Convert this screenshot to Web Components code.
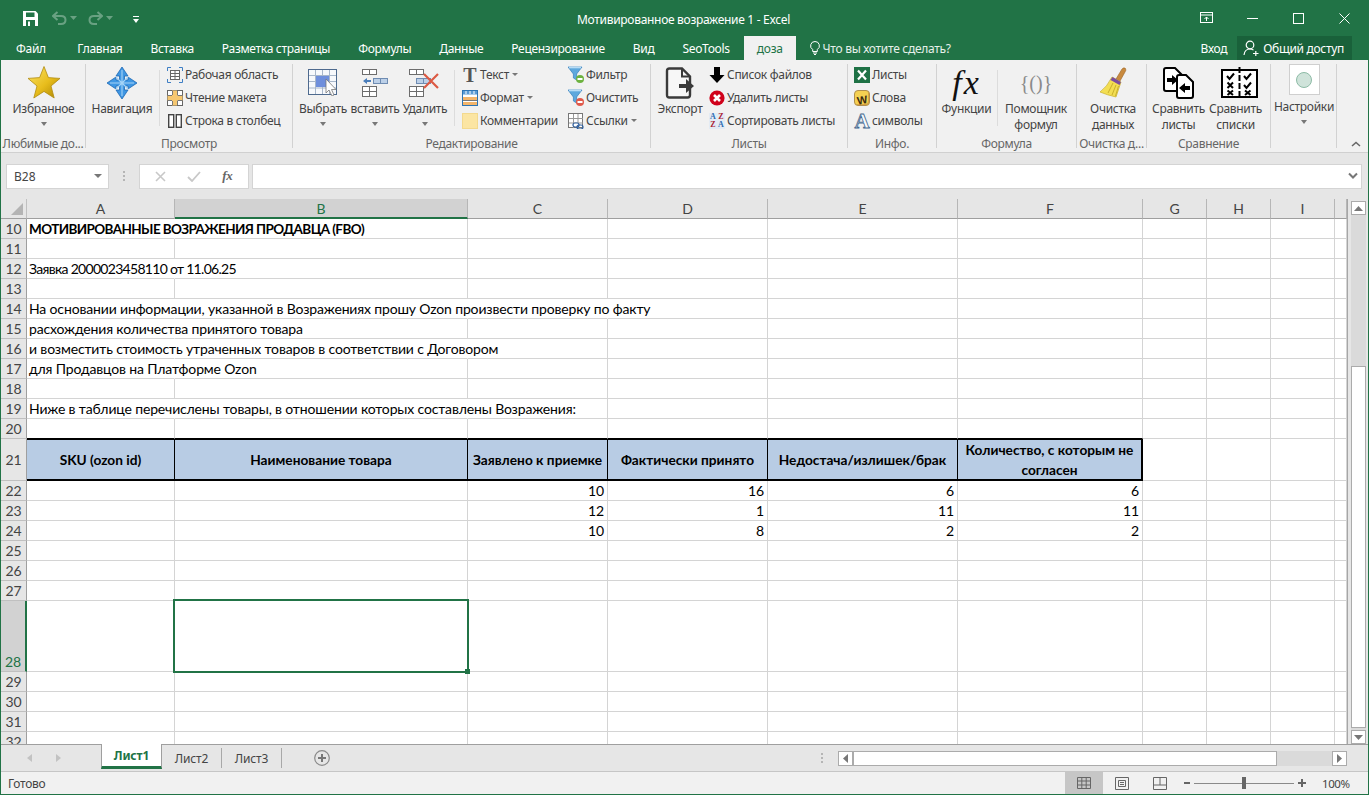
<!DOCTYPE html>
<html lang="ru">
<head>
<meta charset="UTF-8" />
<title>Excel</title>
<style>
  html, body { margin: 0; padding: 0; overflow: hidden; height: 100%; }
</style>
</head>
<body>
<xl-window>
  <xl-titlebar title="Мотивированное возражение 1 - Excel"></xl-titlebar>
  <xl-menu></xl-menu>
  <xl-ribbon>
    <xl-group w="85" label="Любимые до...">
      <xl-big icon="star" w="79" arrow>Избранное</xl-big>
    </xl-group>
    <xl-group w="207" label="Просмотр">
      <xl-big icon="nav" w="66">Навигация</xl-big>
      <xl-sep></xl-sep>
      <xl-col>
        <xl-small icon="workspace">Рабочая область</xl-small>
        <xl-small icon="reading">Чтение макета</xl-small>
        <xl-small icon="rowcol">Строка в столбец</xl-small>
      </xl-col>
    </xl-group>
    <xl-group w="358" label="Редактирование">
      <xl-big icon="select" w="54" arrow>Выбрать</xl-big>
      <xl-big icon="insert" w="50" arrow>вставить</xl-big>
      <xl-big icon="remove" w="50" arrow>Удалить</xl-big>
      <xl-sep></xl-sep>
      <xl-col style="width:106px;box-sizing:border-box">
        <xl-small icon="text" drop>Текст</xl-small>
        <xl-small icon="format" drop>Формат</xl-small>
        <xl-small icon="note">Комментарии</xl-small>
      </xl-col>
      <xl-col>
        <xl-small icon="filter">Фильтр</xl-small>
        <xl-small icon="clear">Очистить</xl-small>
        <xl-small icon="links" drop>Ссылки</xl-small>
      </xl-col>
    </xl-group>
    <xl-group w="197" label="Листы">
      <xl-big icon="export" w="52">Экспорт</xl-big>
      <xl-col>
        <xl-small icon="down">Список файлов</xl-small>
        <xl-small icon="delete">Удалить листы</xl-small>
        <xl-small icon="sort">Сортировать листы</xl-small>
      </xl-col>
    </xl-group>
    <xl-group w="89" label="Инфо.">
      <xl-col>
        <xl-small icon="sheets">Листы</xl-small>
        <xl-small icon="words">Слова</xl-small>
        <xl-small icon="symbols">символы</xl-small>
      </xl-col>
    </xl-group>
    <xl-group w="140" label="Формула">
      <xl-big icon="fx" w="53">Функции</xl-big>
      <xl-sep></xl-sep>
      <xl-big icon="braces" w="68">Помощник<br>формул</xl-big>
    </xl-group>
    <xl-group w="70" label="Очистка д...">
      <xl-big icon="broom" w="66">Очистка<br>данных</xl-big>
    </xl-group>
    <xl-group w="124" label="Сравнение">
      <xl-big icon="cmpsheets" w="57">Сравнить<br>листы</xl-big>
      <xl-big icon="cmplists" w="57" shift="4">Сравнить<br>списки</xl-big>
    </xl-group>
    <xl-group w="66" label="">
      <xl-big icon="settings" w="60" arrow raised>Настройки</xl-big>
    </xl-group>
  </xl-ribbon>
  <xl-formula cell="B28"></xl-formula>
  <xl-sheet></xl-sheet>
  <xl-sheettabs></xl-sheettabs>
  <xl-status></xl-status>
</xl-window>

<script>
const UI_FONT = '"Noto Sans", "Open Sans", sans-serif';
const CELL_FONT = 'Lato, "Noto Sans", sans-serif';

const ICONS = {
  star: [32, 33, `<defs><linearGradient id="g" x1="0" y1="0" x2="1" y2="1"><stop offset="0" stop-color="#fbe46a"/><stop offset=".55" stop-color="#e8bd1c"/><stop offset="1" stop-color="#a98300"/></linearGradient></defs>
    <path d="M16 0.5 L20.4 11.6 L32 12.4 L23 20 L26.2 32 L16 25.4 L5.8 32 L9 20 L0 12.4 L11.6 11.6 Z" fill="url(#g)" stroke="#b18c10" stroke-width=".8"/>`],
  nav: [30, 32, `<path d="M15 0 L21 9 L17.5 9 L17.5 13 L21 13 L21 10 L30 16 L21 22 L21 19 L17.5 19 L17.5 23 L21 23 L15 32 L9 23 L12.5 23 L12.5 19 L9 19 L9 22 L0 16 L9 10 L9 13 L12.5 13 L12.5 9 L9 9 Z" fill="#3f97e3" stroke="#1d68b4" stroke-width=".8"/>
    <path d="M15 3 V29 M3 16 H27 M9 10 L21 22 M21 10 L9 22" stroke="#a5d4f7" stroke-width="1.1" fill="none"/>`],
  select: [30, 27, `<rect x=".5" y=".5" width="28" height="25" fill="#f7f9fc" stroke="#4e6a8e"/>
    <path d="M7.5 1V25M14.5 1V25M21.5 1V25M1 6.5H28M1 12.5H28M1 19H28" stroke="#a8b7ca" fill="none"/>
    <rect x="8" y="7" width="13" height="11" fill="#6f8fdc"/>
    <path d="M18 10 V24 L21 21 L24 27 L26 26 L23.5 20.5 L28 20.5 Z" fill="#fff" stroke="#777" stroke-width=".8"/>`],
  insert: [28, 28, `<g fill="#fff" stroke="#6d6d6d"><rect x="1.5" y=".5" width="7" height="5"/><rect x="8.5" y=".5" width="7" height="5"/>
    <rect x="1.5" y="17.5" width="7" height="5"/><rect x="8.5" y="17.5" width="7" height="5"/><rect x="1.5" y="22.5" width="7" height="5"/><rect x="8.5" y="22.5" width="7" height="5"/></g>
    <g fill="#bcd0e8" stroke="#6f8cb2"><rect x="12.5" y="9.5" width="7" height="5"/><rect x="19.5" y="9.5" width="7" height="5"/></g>
    <path d="M2 12 L6 9 V11 H10 V13 H6 V15 Z" fill="#4a7ebb"/>`],
  remove: [32, 28, `<g fill="#fff" stroke="#6d6d6d"><rect x=".5" y=".5" width="7" height="5"/><rect x="7.5" y=".5" width="7" height="5"/>
    <rect x=".5" y="17.5" width="7" height="5"/><rect x="7.5" y="17.5" width="7" height="5"/><rect x=".5" y="22.5" width="7" height="5"/><rect x="7.5" y="22.5" width="7" height="5"/></g>
    <g fill="#bcd0e8" stroke="#6f8cb2"><rect x="7.5" y="9.5" width="7" height="5"/><rect x="14.5" y="9.5" width="7" height="5"/></g>
    <path d="M15 5 L29 19 M29 5 L15 19" stroke="#dc5a44" stroke-width="2.2"/>`],
  workspace: [16, 16, `<path d="M.5 4V.5H4M12 .5H15.5V4M15.5 12V15.5H12M4 15.5H.5V12" stroke="#3f7fc4" fill="none"/>
    <rect x="3.5" y="3.5" width="9" height="9" fill="#fff" stroke="#666"/><path d="M3.5 6.5H12.5M3.5 9.5H12.5M8 3.5V12.5" stroke="#666" fill="none"/>`],
  reading: [16, 16, `<rect x=".5" y=".5" width="15" height="15" fill="#fff" stroke="#666"/>
    <path d="M5.5 1V15M10.5 1V15M1 5.5H15M1 10.5H15" stroke="#888" fill="none"/><path d="M5 0.5H10V15.5H5ZM.5 5.5H15.5V10.5H.5Z" fill="#f6c770"/>
    <path d="M5.5 1V5M10.5 1V5M5.5 11V15M10.5 11V15M1 5.5H5M11 5.5H15M1 10.5H5M11 10.5H15" stroke="#777" fill="none"/>`],
  rowcol: [16, 16, `<g fill="#fff" stroke="#444" stroke-width="1.4"><rect x="1.7" y="1.7" width="5" height="12.6"/><rect x="9.3" y="1.7" width="5" height="12.6"/></g>`],
  format: [16, 16, `<rect x=".5" y=".5" width="15" height="15" fill="#fff" stroke="#2e75b5"/><rect x="1" y="1" width="14" height="3.5" fill="#5b9bd5"/><rect x="1" y="7" width="14" height="3.5" fill="#f4b56b"/><rect x="1" y="10.5" width="14" height="1.5" fill="#fff"/><rect x="1" y="12" width="14" height="3" fill="#f4b56b"/>
    <path d="M4 1V4M8 1V4M12 1V4" stroke="#fff"/><path d="M1 10.5H15" stroke="#777"/>`],
  note: [16, 16, `<rect x="0" y="0" width="16" height="16" fill="#fbe5a3"/><rect x=".5" y=".5" width="15" height="15" fill="none" stroke="#f3d98e"/>`],
  filter: [16, 18, `<path d="M0 1 H14 L8.6 8 V14 L5.4 12 V8 Z" fill="#5ea8dd" stroke="#3580bd" stroke-width=".7"/><path d="M1 1.5H13" stroke="#b8dcf5" stroke-width="1.6"/>
    <circle cx="12" cy="13" r="4" fill="#6db23f"/><rect x="9.5" y="12" width="5" height="2" fill="#fff"/>`],
  clear: [16, 18, `<path d="M0 1 H14 L8.6 8 V14 L5.4 12 V8 Z" fill="#5ea8dd" stroke="#3580bd" stroke-width=".7"/><path d="M1 1.5H13" stroke="#b8dcf5" stroke-width="1.6"/>
    <circle cx="12" cy="13" r="4" fill="#e05a4b"/><rect x="9.5" y="12" width="5" height="2" fill="#fff"/>`],
  links: [16, 16, `<rect x=".5" y=".5" width="14" height="14" fill="#fff" stroke="#777"/><path d="M5.5 1V15M10 1V15M1 5.5H15M1 10H15" stroke="#999"/>
    <rect x="5" y="10" width="6" height="4" rx="2" fill="#fff" stroke="#2e5f9e" stroke-width="1.2"/><rect x="9" y="12" width="6" height="4" rx="2" fill="none" stroke="#2e5f9e" stroke-width="1.2"/>`],
  export: [30, 32, `<path d="M2 4 Q2 1.5 4.5 1.5 H17 L25 9.5 V28 Q25 30.5 22.5 30.5 H4.5 Q2 30.5 2 28 Z" fill="#f7f7f7" stroke="#3a3a3a" stroke-width="2.4"/><path d="M17 2 V9.5 H25" fill="none" stroke="#3a3a3a" stroke-width="2"/>
    <path d="M14 17 H21 V12 L29 19 L21 26 V21 H14 Z" fill="#3a3a3a"/>`],
  down: [16, 16, `<path d="M5 0 H11 V8 H15.5 L8 16 L.5 8 H5 Z" fill="#000"/>`],
  delete: [16, 16, `<circle cx="8" cy="8" r="7.6" fill="#d0021b"/><path d="M5 5 L11 11 M11 5 L5 11" stroke="#fff" stroke-width="2.6"/>`],
  sheets: [16, 16, `<rect width="16" height="16" fill="#1e7145"/><path d="M4 3.5 L12 12.5 M12 3.5 L4 12.5" stroke="#fff" stroke-width="2.2"/>`],
  cmpsheets: [33, 32, `<g fill="#fff" stroke="#000" stroke-width="2"><path d="M2 3 Q2 1 4 1 H13 L20 8 V22 Q20 24 18 24 H4 Q2 24 2 22 Z"/><path d="M15 10 Q15 8 17 8 H24 L31 15 V29 Q31 31 29 31 H17 Q15 31 15 29 Z"/></g>
    <path d="M5 11 H10 V8 L16 13 L10 18 V15 H5 Z M28 19 H23 V16 L17 21 L23 26 V23 H28 Z" fill="#000"/>`],
  cmplists: [37, 32, `<rect x="1" y="3" width="35" height="27" fill="#fff" stroke="#000" stroke-width="2"/><path d="M18.5 0V32" stroke="#000" stroke-width="2" stroke-dasharray="6 2"/>
    <g fill="none" stroke="#000" stroke-width="2"><path d="M6 9 L8.5 12 L13 6.5M23 9 L25.5 12 L30 6.5M23 18 L25.5 21 L30 15.5"/><path d="M6.5 15.5 L12 21M12 15.5 L6.5 21M6.5 23.5 L12 28M12 23.5 L6.5 28M24 23.5 L29.5 28M29.5 23.5 L24 28"/></g>`],
  broom: [28, 32, `<path d="M17 12 L23 2 Q25 0 26.5 1.5 Q27.5 3 26 5 L21 14 Z" fill="#c98a3e" stroke="#9a6526" stroke-width=".6"/>
    <path d="M13 10 L22 15 L17 30 Q8 28 1 25 Q8 20 13 10 Z" fill="#f3de52" stroke="#c9b02c" stroke-width=".7"/><path d="M13.5 10 L22 15 L20.5 18 L11.5 13 Z" fill="#7b4ea0"/>
    <path d="M14 16 L9 26M17 18 L13 28M19.5 19 L16.5 29" stroke="#c9b02c" fill="none"/>`],
};

function icon(name) {
  const def = ICONS[name];
  if (!def) return '';
  return `<svg width="${def[0]}" height="${def[1]}" viewBox="0 0 ${def[0]} ${def[1]}" style="display:block">${def[2]}</svg>`;
}

// letters that are real text, not shapes
const TEXT_ICONS = {
  text: `<span style="font:bold 20px 'Liberation Serif',serif;color:#555;line-height:16px;letter-spacing:0">T</span>`,
  fx: `<span style="font:italic 34px 'Liberation Serif',serif;color:#111;line-height:32px;letter-spacing:2px">fx</span>`,
  braces: `<span style="font:20px 'Liberation Serif',serif;color:#8a8a8a;line-height:30px;letter-spacing:0">{()}</span>`,
  words: `<span style="display:block;width:16px;height:16px;background:#f5d152;border:1px solid #b08f4e;box-shadow:inset -1px -1px 0 #d9a441;box-sizing:border-box;border-radius:4px;text-align:center"><span style="display:inline-block;transform:rotate(-10deg);font:bold 11px/14px 'Liberation Sans',sans-serif;color:#3a2a10;letter-spacing:0">W</span></span>`,
  symbols: `<span style="font:bold 21px/16px 'Liberation Serif',serif;color:#f7f9fb;-webkit-text-stroke:.8px #44688f;letter-spacing:0">A</span>`,
  sort: `<span style="display:grid;grid-template-columns:8px 8px;width:16px;height:16px;background:#e3ebf4;font:bold 8px/8px 'Liberation Serif',serif;text-align:center;color:#2d6cb2;letter-spacing:0"><span>A</span><span style="color:#a23">Z</span><span style="color:#a23">Z</span><span>A</span></span>`,
};

function renderIcon(name) { return TEXT_ICONS[name] || icon(name); }

class XlWindow extends HTMLElement {
  constructor() {
    super();
    this.attachShadow({ mode: 'open' }).innerHTML = `<style>
      :host { display: flex; flex-direction: column; box-sizing: border-box; width: 1369px; height: 795px;
        border: 1px solid #217346; border-top: 0; background: #e6e6e6; font: 12px ${UI_FONT}; letter-spacing: -.3px; color: #444; overflow: hidden; }
    </style><slot></slot>`;
  }
}

class XlTitlebar extends HTMLElement {
  constructor() {
    super();
    this.attachShadow({ mode: 'open' }).innerHTML = `<style>
      :host { display: flex; align-items: center; height: 36px; background: #217346; color: #fff; flex: none; }
      .qa { width: 576px; display: flex; align-items: center; flex: none; padding-left: 22px; box-sizing: border-box; gap: 0; }
      .title { flex: 1; font-size: 12px; white-space: nowrap; margin-top: 2px; }
      .ctl { display: flex; align-items: center; margin-right: 1px; }
      .ctl div { width: 46px; display: flex; justify-content: center; }
      svg { display: block; }
    </style>
    <div class="qa">
      <svg width="15" height="15" viewBox="0 0 15 15" style="margin-right:14px"><path d="M0 0H12.5L15 2.5V15H0Z" fill="#fff"/><rect x="3" y="1.5" width="8.5" height="4.5" fill="#217346"/><rect x="3" y="9" width="9" height="6" fill="#217346"/><rect x="5" y="10.5" width="2" height="4.5" fill="#fff"/></svg>
      <svg width="15" height="14" viewBox="0 0 15 14" opacity=".4" style="margin-right:3px"><path d="M5.5 1 L1 5 L5.5 9 M1.5 5 H9 Q13.5 5 13.5 9 Q13.5 13 9 13 H6" fill="none" stroke="#d6e7dd" stroke-width="2"/></svg>
      <svg width="7" height="4" viewBox="0 0 7 4" opacity=".4" style="margin-right:11px"><path d="M0 0H7L3.5 4Z" fill="#d6e7dd"/></svg>
      <svg width="15" height="14" viewBox="0 0 15 14" opacity=".4" style="margin-right:3px"><path d="M9.5 1 L14 5 L9.5 9 M13.5 5 H6 Q1.5 5 1.5 9 Q1.5 13 6 13 H9" fill="none" stroke="#d6e7dd" stroke-width="2"/></svg>
      <svg width="7" height="4" viewBox="0 0 7 4" opacity=".4" style="margin-right:20px"><path d="M0 0H7L3.5 4Z" fill="#d6e7dd"/></svg>
      <svg width="6" height="7" viewBox="0 0 6 7" style="margin-top:3px"><path d="M0 0H6V1H0ZM0 3H6L3 7Z" fill="#fff"/></svg>
    </div>
    <div class="title">${this.getAttribute('title')}</div>
    <div class="ctl">
      <div><svg width="13" height="12" viewBox="0 0 13 12"><rect x=".5" y=".5" width="12" height="10" fill="none" stroke="#fff"/><path d="M1 3H12M6.5 9V5M4.5 7L6.5 5L8.5 7" fill="none" stroke="#fff"/></svg></div>
      <div><svg width="11" height="1" viewBox="0 0 11 1"><rect width="11" height="1" fill="#fff"/></svg></div>
      <div><svg width="11" height="11" viewBox="0 0 11 11"><rect x=".5" y=".5" width="10" height="10" fill="none" stroke="#fff"/></svg></div>
      <div><svg width="11" height="11" viewBox="0 0 11 11"><path d="M.5 .5L10.5 10.5M10.5 .5L.5 10.5" stroke="#fff"/></svg></div>
    </div>`;
  }
}

class XlMenu extends HTMLElement {
  constructor() {
    super();
    const items = ['Главная', 'Вставка', 'Разметка страницы', 'Формулы', 'Данные', 'Рецензирование', 'Вид', 'SeoTools'];
    this.attachShadow({ mode: 'open' }).innerHTML = `<style>
      :host { display: flex; height: 24px; align-items: stretch; background: #217346; color: #fff; flex: none; font-size: 12px; }
      .tab { display: flex; align-items: center; padding: 0 14px; white-space: nowrap; }
      .file { padding: 0 15px; font-size: 12px; margin-right: 2.5px; }
      .active { background: #f1f1f1; color: #217346; padding: 0 13px; }
      .tell { display: flex; align-items: center; padding-left: 14px; gap: 3px; color: #e6f0ea; flex: 1; }
      .right { display: flex; align-items: stretch; margin-right: 16px; }
      .login { display: flex; align-items: center; padding: 0 10px; }
      .share { display: flex; align-items: center; gap: 4px; background: #19613a; padding: 0 8px 0 6px; }
    </style>
    <div class="tab file">Файл</div>
    ${items.map(t => `<div class="tab">${t}</div>`).join('')}
    <div class="tab active">доза</div>
    <div class="tell">
      <svg width="10" height="14" viewBox="0 0 10 14"><path d="M5 .5a4.3 4.3 0 0 0-2.3 8V10.5h4.6V8.5A4.3 4.3 0 0 0 5 .5ZM3 12H7M4 13.5H6" fill="none" stroke="#fff"/></svg>
      <span>Что вы хотите сделать?</span>
    </div>
    <div class="right">
      <div class="login">Вход</div>
      <div class="share">
        <svg width="16" height="16" viewBox="0 0 16 16"><circle cx="7" cy="5" r="3.8" fill="none" stroke="#fff" stroke-width="1.2"/><path d="M1 15C1.5 10.5 4 9 7 9C8.5 9 9.5 9.5 10.5 10M10 13.5H15.5M12.8 11V16" fill="none" stroke="#fff" stroke-width="1.2"/></svg>
        <span>Общий доступ</span>
      </div>
    </div>`;
  }
}

class XlRibbon extends HTMLElement {
  constructor() {
    super();
    this.attachShadow({ mode: 'open' }).innerHTML = `<style>
      :host { display: flex; position: relative; flex: none; height: 93px; box-sizing: border-box; padding: 4px 0 5px; background: #f1f1f1;
        border-bottom: 1px solid #d0d0d0; color: #444; }
      .chev { position: absolute; right: 7px; bottom: 5px; }
    </style><slot></slot>
    <svg class="chev" width="10" height="6" viewBox="0 0 10 6"><path d="M1 5L5 1.5L9 5" fill="none" stroke="#666" stroke-width="1.5"/></svg>`;
  }
}

class XlGroup extends HTMLElement {
  constructor() {
    super();
    const w = this.getAttribute('w');
    this.attachShadow({ mode: 'open' }).innerHTML = `<style>
      :host { display: flex; flex-direction: column; flex: none; box-sizing: border-box; width: ${w}px; height: 84px; border-right: 1px solid #d2d2d2; }
      .body { flex: 1; display: flex; justify-content: flex-start; min-height: 0; padding: 0 3px; }
      .label { height: 14px; line-height: 14px; margin-bottom: -3px; text-align: center; white-space: nowrap; color: #666; }
    </style><div class="body"><slot></slot></div><div class="label">${this.getAttribute('label')}</div>`;
  }
}

class XlBig extends HTMLElement {
  constructor() {
    super();
    const name = this.getAttribute('icon');
    const w = this.getAttribute('w');
    const raised = this.hasAttribute('raised');
    const shift = this.getAttribute('shift') || 0;
    const art = name === 'settings'
      ? `<span class="box"><span class="dot"></span></span>`
      : renderIcon(name);
    this.attachShadow({ mode: 'open' }).innerHTML = `<style>
      :host { display: flex; flex-direction: column; align-items: center; flex: none; width: ${w}px; text-align: center; line-height: 16px; }
      .art { height: ${raised ? 35 : 37}px; display: flex; align-items: ${raised ? 'flex-start' : 'center'}; justify-content: center; flex: none; transform: translateX(${shift}px); }
      .box { display: flex; align-items: center; justify-content: center; box-sizing: border-box; width: 31px; height: 31px; background: #fff; border: 1px solid #cfcfcf; }
      .dot { width: 14px; height: 14px; border-radius: 50%; background: #cfe3da; border: 1px solid #8dbba6; }
      .arrow { margin-top: 5px; width: 0; height: 0; border: 3.5px solid transparent; border-top: 4px solid #777; border-bottom: 0; }
    </style><div class="art">${art}</div><div><slot></slot></div>${this.hasAttribute('arrow') ? '<div class="arrow"></div>' : ''}`;
  }
}

class XlCol extends HTMLElement {
  constructor() {
    super();
    this.attachShadow({ mode: 'open' }).innerHTML = `<style>
      :host { display: flex; flex-direction: column; flex: none; padding: 0 3px; margin-top: -1px; }
    </style><slot></slot>`;
  }
}

class XlSmall extends HTMLElement {
  constructor() {
    super();
    this.attachShadow({ mode: 'open' }).innerHTML = `<style>
      :host { display: flex; align-items: center; gap: 2px; height: 23px; white-space: nowrap; }
      .i { width: 16px; height: 16px; display: flex; align-items: center; justify-content: center; flex: none; }
      .d { margin-left: 1px; width: 0; height: 0; border: 3px solid transparent; border-top: 3.5px solid #777; border-bottom: 0; }
    </style><span class="i">${renderIcon(this.getAttribute('icon'))}</span><span><slot></slot></span>${this.hasAttribute('drop') ? '<span class="d"></span>' : ''}`;
  }
}

class XlSep extends HTMLElement {
  constructor() {
    super();
    this.attachShadow({ mode: 'open' }).innerHTML = `<style>
      :host { display: block; flex: none; width: 1px; height: 56px; margin: 6px 4px 0; background: #dcdcdc; }
    </style>`;
  }
}

class XlFormula extends HTMLElement {
  constructor() {
    super();
    this.attachShadow({ mode: 'open' }).innerHTML = `<style>
      :host { display: flex; align-items: center; height: 46px; flex: none; box-sizing: border-box; padding: 10px 6px 10px 5px; background: #e6e6e6; color: #444; }
      .box { height: 25px; box-sizing: border-box; background: #fff; border: 1px solid #d4d4d4; display: flex; align-items: center; }
      .name { width: 103px; padding: 0 6px 0 7px; justify-content: space-between; font-size: 12px; letter-spacing: 0; }
      .caret { width: 0; height: 0; border: 4px solid transparent; border-top: 4px solid #777; border-bottom: 0; }
      .dots { width: 30px; display: flex; flex-direction: column; align-items: center; gap: 2px; }
      .dots i { width: 2px; height: 2px; background: #b5b5b5; }
      .btns { width: 110px; justify-content: space-around; padding: 0 5px; }
      .fx { font: italic bold 13px 'Liberation Serif', serif; color: #666; }
      .input { flex: 1; margin-left: 3px; justify-content: flex-end; padding-right: 3px; }
    </style>
    <div class="box name"><span>${this.getAttribute('cell')}</span><span class="caret"></span></div>
    <div class="dots"><i></i><i></i><i></i></div>
    <div class="box btns">
      <svg width="11" height="11" viewBox="0 0 11 11"><path d="M1 1L10 10M10 1L1 10" stroke="#c8c8c8" stroke-width="1.6"/></svg>
      <svg width="14" height="11" viewBox="0 0 14 11"><path d="M1 6L5 10L13 1" fill="none" stroke="#c8c8c8" stroke-width="1.8"/></svg>
      <span class="fx">fx</span>
    </div>
    <div class="box input"><svg width="10" height="8" viewBox="0 0 10 8"><path d="M1 1.5L5 5.5L9 1.5" fill="none" stroke="#777" stroke-width="2"/></svg></div>`;
  }
}

class XlSheet extends HTMLElement {
  constructor() {
    super();
    const cols = [['A', 148], ['B', 293], ['C', 140], ['D', 160], ['E', 190], ['F', 185], ['G', 64], ['H', 64], ['I', 64], ['', 12]];
    const template = '26px ' + cols.map(c => c[1] + 'px').join(' ');
    const heights = { 21: 42, 28: 71 };
    // how many columns the long text of a row runs across, gridlines hidden there
    const spill = { 10: 1, 12: 1, 14: 3, 15: 1, 16: 2, 17: 1, 19: 2 };
    const text = {
      10: { A: 'МОТИВИРОВАННЫЕ ВОЗРАЖЕНИЯ ПРОДАВЦА (FBO)' },
      12: { A: 'Заявка 2000023458110 от 11.06.25' },
      14: { A: 'На основании информации, указанной в Возражениях прошу Ozon произвести проверку по факту' },
      15: { A: 'расхождения количества принятого товара' },
      16: { A: 'и возместить стоимость утраченных товаров в соответствии с Договором' },
      17: { A: 'для Продавцов на Платформе Ozon' },
      19: { A: 'Ниже в таблице перечислены товары, в отношении которых составлены Возражения:' },
      21: { A: 'SKU (ozon id)', B: 'Наименование товара', C: 'Заявлено к приемке', D: 'Фактически принято', E: 'Недостача/излишек/брак', F: 'Количество, с которым не согласен' },
      22: { C: 10, D: 16, E: 6, F: 6 },
      23: { C: 12, D: 1, E: 11, F: 11 },
      24: { C: 10, D: 8, E: 2, F: 2 },
    };
    let html = `<div class="corner"><svg width="12" height="12" viewBox="0 0 12 12"><path d="M12 0V12H0Z" fill="#b4b4b4"/></svg></div>`;
    for (const [c] of cols) html += `<div class="colh${c === 'B' ? ' sel' : ''}">${c}</div>`;
    for (let r = 10; r <= 32; r++) {
      html += `<div class="rowh${r === 28 ? ' sel' : ''}">${r}</div>`;
      cols.forEach(([c], i) => {
        const v = text[r] && text[r][c] !== undefined ? text[r][c] : '';
        const cls = ['cell'];
        const tableCol = c !== '' && 'ABCDEF'.includes(c);
        if (typeof v === 'number') cls.push('num');
        if (r === 10 && c === 'A') cls.push('bold');
        if (r === 12 && c === 'A') cls.push('digits');
        if (r === 21 && tableCol) cls.push('hd');
        if (r === 21 && c === 'F') cls.push('last');
        if (r === 20 && tableCol) cls.push('above');
        if (i < (spill[r] || 0)) cls.push('spill');
        const active = r === 28 && c === 'B';
        html += `<div class="${cls.join(' ')}"><span>${v}</span>${active ? '<div class="selection"><i class="handle"></i></div>' : ''}</div>`;
      });
    }
    const rowsT = ['20px'];
    for (let r = 10; r <= 32; r++) rowsT.push((heights[r] || 20) + 'px');
    this.attachShadow({ mode: 'open' }).innerHTML = `<style>
      :host { display: flex; flex: none; height: 545px; background: #e6e6e6; }
      .wrap { width: 1346px; overflow: hidden; flex: none; border-right: 1px solid #a6a6a6; box-sizing: content-box; }
      .grid { display: grid; grid-template-columns: ${template}; grid-template-rows: ${rowsT.join(' ')}; background: #fff; font: 14px ${CELL_FONT}; letter-spacing: -.15px; color: #000; }
      .corner { background: #e6e6e6; display: flex; align-items: flex-end; justify-content: flex-end; padding: 0 3px 3px 0; box-sizing: border-box; border-bottom: 1px solid #9f9f9f; border-right: 1px solid #c0c0c0; }
      .colh { background: #e6e6e6; display: flex; align-items: center; justify-content: center; border-bottom: 1px solid #9f9f9f; border-right: 1px solid #b6b6b6; box-sizing: border-box; color: #444; font-size: 14px; letter-spacing: 0; }
      .colh.sel { background: #d2d2d2; color: #217346; border-bottom: 2px solid #217346; }
      .rowh { background: #e6e6e6; color: #444; display: flex; align-items: center; justify-content: center; box-sizing: border-box; border-bottom: 1px solid #c0c0c0; border-right: 1px solid #9f9f9f; font-size: 14px; letter-spacing: 0; }
      .rowh.sel { background: #d2d2d2; color: #217346; border-right: 2px solid #217346; align-items: flex-end; padding-bottom: 1px; }
      .cell { position: relative; display: flex; align-items: center; box-sizing: border-box; padding: 0 2px; white-space: nowrap; border-right: 1px solid #d4d4d4; border-bottom: 1px solid #d4d4d4; min-width: 0; }
      .cell.spill { border-right-color: transparent; }
      .cell.num { justify-content: flex-end; padding-right: 3px; }
      .cell.bold { font-weight: bold; font-size: 13.5px; letter-spacing: -.6px; }
      .cell.digits { letter-spacing: -.7px; }
      .cell.above { border-bottom-color: #000; }
      .cell.hd { background: #b8cce4; justify-content: center; text-align: center; font-weight: bold; white-space: normal; line-height: 20px; font-size: 13.7px; letter-spacing: 0;
        border-top: 1px solid #000; border-bottom: 2px solid #000; border-right: 1px solid #000; padding: 1px 0 0; }
      .cell.hd.last { border-right: 2px solid #000; }
      .selection { position: absolute; left: -2px; top: -2px; right: -2px; bottom: -2px; border: 2px solid #217346; z-index: 2; }
      .handle { position: absolute; right: -3px; bottom: -3px; width: 5px; height: 5px; background: #217346; }
      .vbar { flex: 1; display: flex; flex-direction: column; align-items: center; padding: 2px 0 0; box-sizing: border-box; }
      .vtrack { width: 15px; flex: 1; display: flex; flex-direction: column; background: #dadada; }
      .vbtn { flex: none; box-sizing: border-box; height: 14px; background: #fff; border: 1px solid #ababab; display: flex; align-items: center; justify-content: center; }
      .vgap { height: 151px; flex: none; }
      .vthumb { flex: 1; background: #fff; border: 1px solid #ababab; box-sizing: border-box; margin-bottom: 2px; }
    </style>
    <div class="wrap"><div class="grid">${html}</div></div>
    <div class="vbar"><div class="vtrack">
      <div class="vbtn"><svg width="9" height="5" viewBox="0 0 9 5"><path d="M0 5L4.5 0L9 5Z" fill="#777"/></svg></div>
      <div class="vgap"></div>
      <div class="vthumb"></div>
      <div class="vbtn"><svg width="9" height="5" viewBox="0 0 9 5"><path d="M0 0H9L4.5 5Z" fill="#777"/></svg></div>
    </div></div>`;
  }
}

class XlSheetTabs extends HTMLElement {
  constructor() {
    super();
    this.attachShadow({ mode: 'open' }).innerHTML = `<style>
      :host { display: flex; align-items: stretch; height: 28px; flex: none; box-sizing: border-box; background: #e6e6e6; border-top: 1px solid #9f9f9f; border-bottom: 1px solid #c6c6c6; color: #444; font-size: 12px; letter-spacing: -.1px; }
      .nav { width: 100px; display: flex; align-items: center; gap: 24px; padding-left: 26px; box-sizing: border-box; flex: none; }
      .tab { display: flex; align-items: center; justify-content: center; flex: none; box-sizing: border-box; }
      .on { width: 61px; margin-top: -1px; margin-bottom: 2px; background: #fff; color: #217346; font-weight: bold; border-left: 1px solid #9f9f9f; border-right: 1px solid #9f9f9f; border-bottom: 3px solid #217346; }
      .off { width: 60px; height: 20px; margin-top: 3px; border-right: 1px solid #a8a8a8; }
      .plus { margin-left: 32px; display: flex; align-items: center; flex: none; }
      .grip { margin-left: 491px; width: 2px; display: flex; flex-direction: column; justify-content: center; gap: 2px; flex: none; }
      .grip i { width: 2px; height: 2px; background: #b5b5b5; }
      .sb { margin-left: 15px; display: flex; align-items: center; flex: none; }
      .hb { display: flex; align-items: center; justify-content: center; box-sizing: border-box; width: 15px; height: 15px; background: #fff; border: 1px solid #ababab; flex: none; }
      .track { display: flex; width: 479px; height: 15px; background: #dadada; }
      .thumb { width: 424px; background: #fff; box-sizing: border-box; border: 1px solid #ababab; }
    </style>
    <div class="nav">
      <svg width="5" height="8" viewBox="0 0 5 8"><path d="M5 0V8L0 4Z" fill="#c2c2c2"/></svg>
      <svg width="5" height="8" viewBox="0 0 5 8"><path d="M0 0V8L5 4Z" fill="#c2c2c2"/></svg>
    </div>
    <div class="tab on">Лист1</div>
    <div class="tab off">Лист2</div>
    <div class="tab off">Лист3</div>
    <div class="plus"><svg width="16" height="16" viewBox="0 0 16 16"><circle cx="8" cy="8" r="7.3" fill="none" stroke="#8a8a8a" stroke-width="1.2"/><path d="M8 4V12M4 8H12" stroke="#777" stroke-width="2"/></svg></div>
    <div class="grip"><i></i><i></i><i></i></div>
    <div class="sb">
      <div class="hb"><svg width="5" height="9" viewBox="0 0 5 9"><path d="M5 0V9L0 4.5Z" fill="#777"/></svg></div>
      <div class="track"><div class="thumb"></div></div>
      <div class="hb"><svg width="5" height="9" viewBox="0 0 5 9"><path d="M0 0V9L5 4.5Z" fill="#777"/></svg></div>
    </div>`;
  }
}

class XlStatus extends HTMLElement {
  constructor() {
    super();
    this.attachShadow({ mode: 'open' }).innerHTML = `<style>
      :host { display: flex; align-items: stretch; flex: 1; background: #f1f1f1; color: #444; font-size: 12px; }
      .msg { padding-left: 7px; flex: 1; display: flex; align-items: center; }
      .view { width: 38px; display: flex; align-items: center; justify-content: center; }
      .view.on { background: #c6c6c6; }
      .zoom { display: flex; align-items: center; box-sizing: border-box; width: 143px; padding: 0 16px 0 5px; gap: 4px; flex: none; }
      .line { position: relative; flex: 1; height: 1px; background: #8a8a8a; }
      .knob { position: absolute; left: 48px; top: -6px; width: 4px; height: 12px; background: #666; }
      .pct { width: 46px; box-sizing: border-box; display: flex; align-items: center; font-size: 11.5px; letter-spacing: -.4px; flex: none; }
    </style>
    <div class="msg">Готово</div>
    <div class="view on"><svg width="14" height="12" viewBox="0 0 14 12"><path d="M.5 .5H13.5V11.5H.5ZM.5 4H13.5M.5 8H13.5M4.8 .5V11.5M9.2 .5V11.5" fill="none" stroke="#666"/></svg></div>
    <div class="view"><svg width="14" height="13" viewBox="0 0 14 13"><path d="M.5 .5H13.5V12.5H.5Z" fill="none" stroke="#666"/><path d="M3.5 3.5H10.5V9.5H3.5ZM5 5.5H9M5 7.5H9" fill="none" stroke="#666"/></svg></div>
    <div class="view"><svg width="14" height="13" viewBox="0 0 14 13"><path d="M.5 .5H13.5V12.5H.5ZM.5 8H7M7 .5V8M7 8H13" fill="none" stroke="#666"/></svg></div>
    <div class="zoom">
      <svg width="6" height="2" viewBox="0 0 6 2"><rect width="6" height="2" fill="#666"/></svg>
      <div class="line"><div class="knob"></div></div>
      <svg width="8" height="8" viewBox="0 0 8 8"><path d="M0 3H8V5H0ZM3 0H5V8H3Z" fill="#666"/></svg>
    </div>
    <div class="pct">100%</div>`;
  }
}

customElements.define('xl-window', XlWindow);
customElements.define('xl-titlebar', XlTitlebar);
customElements.define('xl-menu', XlMenu);
customElements.define('xl-ribbon', XlRibbon);
customElements.define('xl-group', XlGroup);
customElements.define('xl-big', XlBig);
customElements.define('xl-col', XlCol);
customElements.define('xl-small', XlSmall);
customElements.define('xl-sep', XlSep);
customElements.define('xl-formula', XlFormula);
customElements.define('xl-sheet', XlSheet);
customElements.define('xl-sheettabs', XlSheetTabs);
customElements.define('xl-status', XlStatus);
</script>
</body>
</html>
